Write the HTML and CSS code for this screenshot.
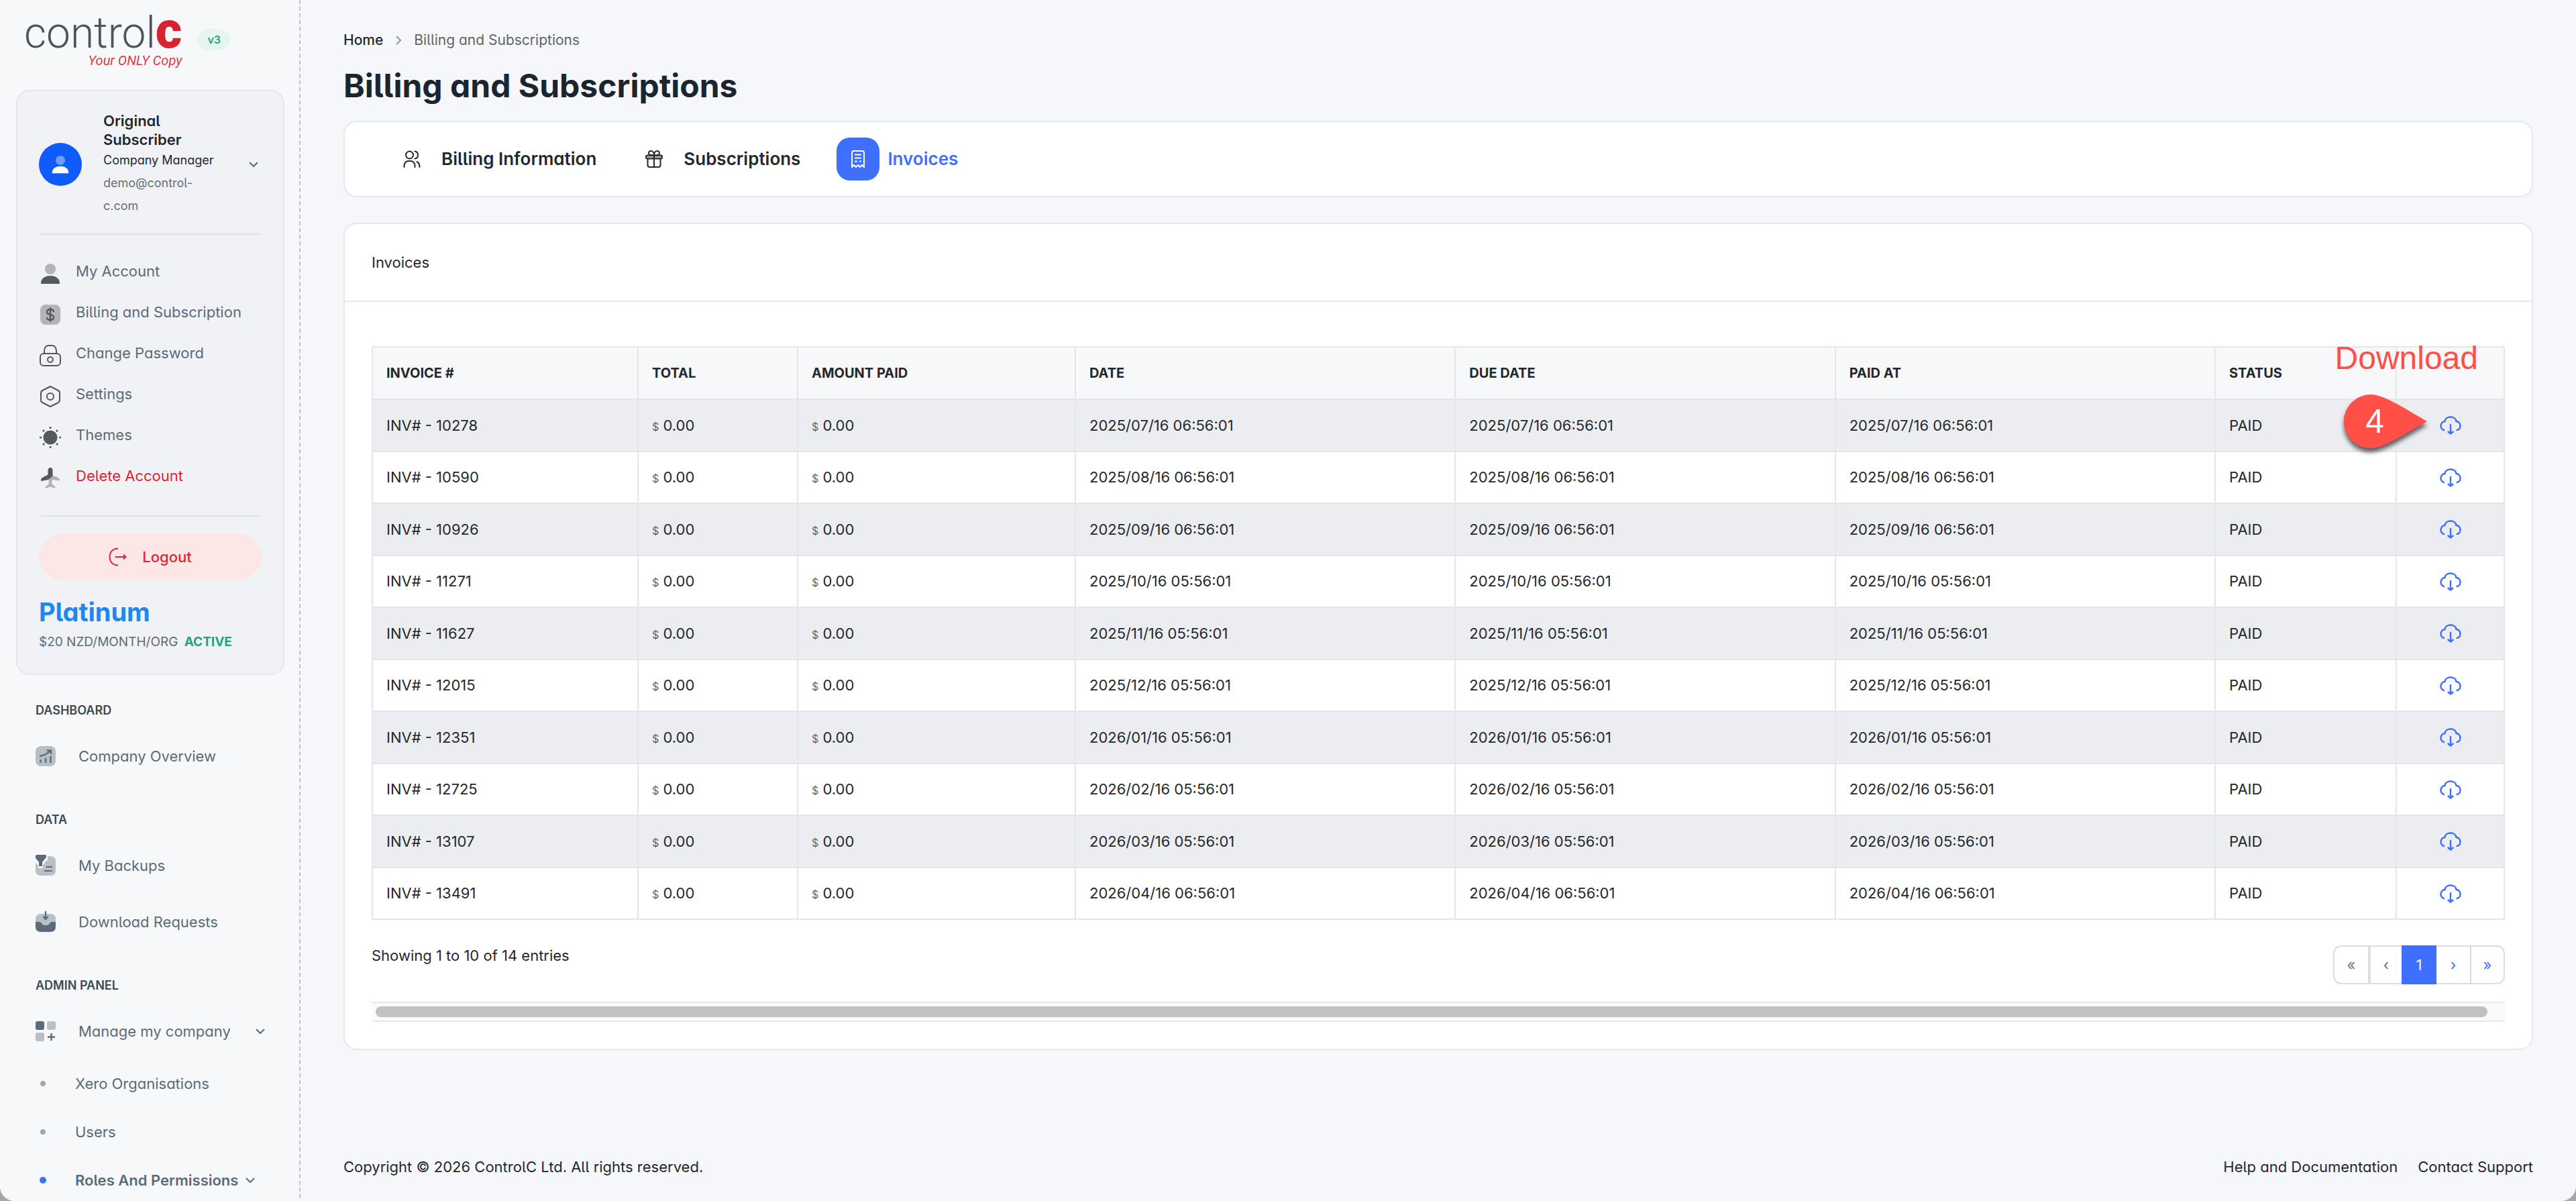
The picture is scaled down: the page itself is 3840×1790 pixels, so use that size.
FILE: index.html
```html
<!DOCTYPE html>
<html lang="en">
<head>
  <meta charset="UTF-8" />
  <meta name="viewport" content="width=device-width, initial-scale=1.0"/>
  <title>Billing and Subscriptions - ControlC</title>
  <link rel="stylesheet" href="styles.css">
</head>
<body>
  <!-- Shared icons -->
  <svg class="sprite" aria-hidden="true">
    <symbol id="i-user" viewBox="0 0 32 32">
      <circle cx="16" cy="9" r="8" opacity=".4"/>
      <path d="M2 31v-1C2 23 8 19 16 19s14 4 14 11v1z"/>
    </symbol>
    <symbol id="i-chevron" viewBox="0 0 16 16">
      <path d="M2 5l6 6 6-6" fill="none" stroke="currentColor" stroke-width="2"/>
    </symbol>
    <symbol id="i-cloud" viewBox="0 0 32 28">
      <g fill="none" stroke="currentColor" stroke-width="2.400" stroke-linecap="round" stroke-linejoin="round">
        <path d="M6 21C3 20 1.500 17 1.500 14.500C1.500 11 4 8 7.500 8C8 4 11.500 1.500 16 1.500s8 2.500 8.500 6.500c3.500 0 6 3 6 6.500c0 3.500-2 6-5 6.500"/>
        <path d="M16 13v13M12.500 23.500l3.500 3 3.500-3"/>
      </g>
    </symbol>
  </svg>

  <div class="app">
    <aside class="sidebar">
      <div class="brand">
        <a class="logo" href="#">
          <span class="logo-name">control<b>c</b></span>
          <em>Your ONLY Copy</em>
        </a>
        <span class="version">v3</span>
      </div>

      <div class="profile">
        <button class="profile-head">
          <span class="avatar"><svg width="28" height="30"><use href="#i-user"/></svg></span>
          <span class="profile-info">
            <strong>Original Subscriber</strong>
            <span class="role">Company Manager</span>
            <span class="email">demo@control-c.com</span>
          </span>
          <svg class="chevron" width="16" height="16"><use href="#i-chevron"/></svg>
        </button>

        <nav class="profile-menu">
          <a href="#"><svg width="32" height="32"><use href="#i-user"/></svg>My Account</a>
          <a href="#">
            <svg width="32" height="32" viewBox="0 0 32 32">
              <rect x="1" y="1" width="30" height="30" rx="8" opacity=".4"/>
              <path d="M21 12c0-3-2-4-5-4s-5 1-5 4 3 3.500 5 4 5 1 5 4-2 4-5 4-5-1-5-4M16 5.500v21" fill="none" stroke="currentColor" stroke-width="2.400"/>
            </svg>Billing and Subscription</a>
          <a href="#">
            <svg width="32" height="32" viewBox="0 0 32 32" fill="none" stroke="currentColor" stroke-width="2">
              <rect x="1" y="13" width="30" height="18" rx="5"/>
              <path d="M7 13V9c0-5 3-8 6-8h6c3 0 6 3 6 8v4"/>
              <circle cx="16" cy="22" r="4"/>
            </svg>Change Password</a>
          <a href="#">
            <svg width="32" height="32" viewBox="0 0 32 32" fill="none" stroke="currentColor" stroke-width="2" stroke-linejoin="round">
              <path d="M16 1l11 5.500q3 1.500 3 4v11q0 2.500-3 4L16 31 5 25.500q-3-1.500-3-4v-11q0-2.500 3-4z"/>
              <circle cx="16" cy="16" r="5"/>
            </svg>Settings</a>
          <a href="#">
            <svg width="32" height="32" viewBox="0 0 32 32">
              <circle cx="16" cy="16" r="10.500"/>
              <path d="M16 0v3M16 29v3M0 16h3M29 16h3M5 5l2 2M25 25l2 2M5 27l2-2M25 7l2-2" stroke="currentColor" stroke-width="2.500"/>
            </svg>Themes</a>
          <a class="danger" href="#">
            <svg width="32" height="32" viewBox="0 0 32 32">
              <g opacity=".4">
                <path d="M18 11l9 3.500c3 1.500 3 3 3 5l-11-1.500-1 6 5 4c1 1 .5 2 0 3l-7-2.500L9 31c-.5-1-1-2 0-3l5-4-.5-5z"/>
              </g>
              <path d="M12.500 4c0-2 1.500-4 3.500-4s3.500 2 3.500 4v8.500L13 18 2 20c0-2 0-4 3-5.500l7.500-4z"/>
            </svg>Delete Account</a>
        </nav>

        <button class="logout">
          <svg width="28" height="28" viewBox="0 0 28 28" fill="none" stroke="currentColor" stroke-width="2">
            <path d="M14 1.500C6 1.500 1.500 7 1.500 14S6 26.500 14 26.500M9.500 14h14"/>
            <path d="M22 9.500l5 4.500-5 4.500z" fill="currentColor" stroke="none"/>
          </svg>Logout
        </button>
        <h2 class="plan">Platinum</h2>
        <p class="price">$20 NZD/MONTH/ORG <b>ACTIVE</b></p>
      </div>

      <nav class="menu">
        <h3>Dashboard</h3>
        <a class="item" href="#">
          <svg width="30" height="30" viewBox="0 0 30 30">
            <rect width="30" height="30" rx="8" opacity=".4"/>
            <path d="M7.500 20v5M15 18v7M22.500 15v10M6 15c6-1 11-3 16-8M16.500 6.500H23V12" fill="none" stroke="currentColor" stroke-width="2.400"/>
          </svg>Company Overview</a>
      </nav>
      <nav class="menu">
        <h3>Data</h3>
        <a class="item" href="#">
          <svg width="30" height="32" viewBox="0 0 30 32">
            <path d="M18 2h4q8 0 8 8v13q0 8-8 8H8q-8 0-8-8V12l4 4v3q3 3 7 0v-4l7-8z" opacity=".4"/>
            <path d="M1.500 0H15q1 0 1 1v3L10 11v6H5v-6L0 5V1.500Q0 0 1.500 0z"/>
            <path d="M16 18h9M13 24h12" stroke="currentColor" stroke-width="2"/>
          </svg>My Backups</a>
        <a class="item" href="#">
          <svg width="30" height="32" viewBox="0 0 30 32">
            <path d="M0 16v-4q0-8 8-8h14q8 0 8 8v4h-6q-2 0-3 2t-3 3h-6q-2-1-3-3t-3-2z" opacity=".4"/>
            <path d="M0 16h6q2 0 3 2t3 3h6q2-1 3-3t3-2h6v7q0 8-8 8H8q-8 0-8-8z"/>
            <path d="M15 0v10M11.500 8l3.500 4 3.500-4" fill="none" stroke="currentColor" stroke-width="2.400"/>
          </svg>Download Requests</a>
      </nav>
      <nav class="menu">
        <h3>Admin Panel</h3>
        <a class="item" href="#">
          <svg width="30" height="30" viewBox="0 0 30 30">
            <rect width="13" height="13" rx="3"/>
            <rect x="17" width="13" height="13" rx="3" opacity=".4"/>
            <rect y="17" width="13" height="13" rx="3" opacity=".4"/>
            <path d="M23.500 18v11M18 23.500h11" stroke="currentColor" stroke-width="2.400"/>
          </svg>Manage my company
          <svg class="chevron end" width="16" height="16"><use href="#i-chevron"/></svg></a>
        <a class="sub" href="#">Xero Organisations</a>
        <a class="sub" href="#">Users</a>
        <a class="sub active" href="#">Roles And Permissions
          <svg class="chevron" width="16" height="16"><use href="#i-chevron"/></svg></a>
      </nav>
    </aside>

    <main class="content">
      <nav class="breadcrumb">
        <a href="#">Home</a>
        <svg width="16" height="16" viewBox="0 0 16 16"><path d="M5 2l6 6-6 6" fill="none" stroke="#8a959f" stroke-width="2"/></svg>
        <span>Billing and Subscriptions</span>
      </nav>
      <h1>Billing and Subscriptions</h1>

      <nav class="card tabs">
        <a href="#">
          <span class="tab-icon">
            <svg width="26" height="26" viewBox="0 0 26 26" fill="none" stroke="currentColor" stroke-width="2" stroke-linecap="round">
              <circle cx="9.500" cy="7" r="5.500"/>
              <path d="M1.500 25v-2c0-4 3-7 6-7h4c3 0 6 3 6 7v2M17.500 1.500c3 .5 4.500 3 4.500 5.500s-1.500 5-4.500 5.500M20.500 17c3 1.500 4 3.500 4 8"/>
            </svg>
          </span>Billing Information</a>
        <a href="#">
          <span class="tab-icon">
            <svg width="26" height="26" viewBox="0 0 26 26" fill="none" stroke="currentColor" stroke-width="2">
              <rect x="1" y="7.500" width="24" height="5" rx="2" fill="#aaadb0"/>
              <path d="M3.500 12.500V22q0 3 3 3h13q3 0 3-3v-9.500M13 7v18M13 7.500C11 7.500 5 7.500 5 4.500C5 2.500 6.500 1 8.500 1C12 1 13 5 13 7.500C13 5 14 1 17.500 1C19.500 1 21 2.500 21 4.500C21 7.500 15 7.500 13 7.500z"/>
            </svg>
          </span>Subscriptions</a>
        <a class="active" href="#">
          <span class="tab-icon">
            <svg width="22" height="26" viewBox="0 0 22 26" fill="none" stroke="currentColor" stroke-width="2">
              <path d="M2 25V4q0-3 3-3h12q3 0 3 3v21l-3-3-3 3-3-3-3 3-3-3zM6 6.500h10M6 11.500h10M6 16.500h4M13 16.500h3"/>
            </svg>
          </span>Invoices</a>
      </nav>

      <section class="card">
        <h2 class="card-header">Invoices</h2>
        <div class="card-body">
          <div class="table-wrap">
            <table class="invoices">
              <colgroup>
                <col class="col-number"><col class="col-total"><col class="col-paid">
                <col><col><col>
                <col class="col-status"><col class="col-action">
              </colgroup>
              <thead>
                <tr>
                  <th>Invoice #</th><th>Total</th><th>Amount Paid</th><th>Date</th><th>Due Date</th><th>Paid At</th><th>Status</th><th></th>
                </tr>
              </thead>
              <tbody>
                <tr><td>INV# - 10278</td><td><small>$</small> 0.00</td><td><small>$</small> 0.00</td><td>2025/07/16 06:56:01</td><td>2025/07/16 06:56:01</td><td>2025/07/16 06:56:01</td><td>PAID</td><td><a href="#" aria-label="Download"><svg width="32" height="28"><use href="#i-cloud"/></svg></a></td></tr>
                <tr><td>INV# - 10590</td><td><small>$</small> 0.00</td><td><small>$</small> 0.00</td><td>2025/08/16 06:56:01</td><td>2025/08/16 06:56:01</td><td>2025/08/16 06:56:01</td><td>PAID</td><td><a href="#" aria-label="Download"><svg width="32" height="28"><use href="#i-cloud"/></svg></a></td></tr>
                <tr><td>INV# - 10926</td><td><small>$</small> 0.00</td><td><small>$</small> 0.00</td><td>2025/09/16 06:56:01</td><td>2025/09/16 06:56:01</td><td>2025/09/16 06:56:01</td><td>PAID</td><td><a href="#" aria-label="Download"><svg width="32" height="28"><use href="#i-cloud"/></svg></a></td></tr>
                <tr><td>INV# - 11271</td><td><small>$</small> 0.00</td><td><small>$</small> 0.00</td><td>2025/10/16 05:56:01</td><td>2025/10/16 05:56:01</td><td>2025/10/16 05:56:01</td><td>PAID</td><td><a href="#" aria-label="Download"><svg width="32" height="28"><use href="#i-cloud"/></svg></a></td></tr>
                <tr><td>INV# - 11627</td><td><small>$</small> 0.00</td><td><small>$</small> 0.00</td><td>2025/11/16 05:56:01</td><td>2025/11/16 05:56:01</td><td>2025/11/16 05:56:01</td><td>PAID</td><td><a href="#" aria-label="Download"><svg width="32" height="28"><use href="#i-cloud"/></svg></a></td></tr>
                <tr><td>INV# - 12015</td><td><small>$</small> 0.00</td><td><small>$</small> 0.00</td><td>2025/12/16 05:56:01</td><td>2025/12/16 05:56:01</td><td>2025/12/16 05:56:01</td><td>PAID</td><td><a href="#" aria-label="Download"><svg width="32" height="28"><use href="#i-cloud"/></svg></a></td></tr>
                <tr><td>INV# - 12351</td><td><small>$</small> 0.00</td><td><small>$</small> 0.00</td><td>2026/01/16 05:56:01</td><td>2026/01/16 05:56:01</td><td>2026/01/16 05:56:01</td><td>PAID</td><td><a href="#" aria-label="Download"><svg width="32" height="28"><use href="#i-cloud"/></svg></a></td></tr>
                <tr><td>INV# - 12725</td><td><small>$</small> 0.00</td><td><small>$</small> 0.00</td><td>2026/02/16 05:56:01</td><td>2026/02/16 05:56:01</td><td>2026/02/16 05:56:01</td><td>PAID</td><td><a href="#" aria-label="Download"><svg width="32" height="28"><use href="#i-cloud"/></svg></a></td></tr>
                <tr><td>INV# - 13107</td><td><small>$</small> 0.00</td><td><small>$</small> 0.00</td><td>2026/03/16 05:56:01</td><td>2026/03/16 05:56:01</td><td>2026/03/16 05:56:01</td><td>PAID</td><td><a href="#" aria-label="Download"><svg width="32" height="28"><use href="#i-cloud"/></svg></a></td></tr>
                <tr><td>INV# - 13491</td><td><small>$</small> 0.00</td><td><small>$</small> 0.00</td><td>2026/04/16 06:56:01</td><td>2026/04/16 06:56:01</td><td>2026/04/16 06:56:01</td><td>PAID</td><td><a href="#" aria-label="Download"><svg width="32" height="28"><use href="#i-cloud"/></svg></a></td></tr>
              </tbody>
            </table>

            <!-- Step callout over the table -->
            <span class="callout-label">Download</span>
            <div class="callout">
              <svg width="124" height="80" viewBox="0 0 124 80"><path d="M40 0C60 0 92 22 124 40C92 58 60 80 40 80C18 80 0 62 0 40S18 0 40 0z" fill="#ff4f47"/></svg>
              <span>4</span>
            </div>
          </div>

          <div class="table-footer">
            <p>Showing 1 to 10 of 14 entries</p>
            <div class="pagination">
              <button disabled>«</button>
              <button disabled>‹</button>
              <button class="current">1</button>
              <button>›</button>
              <button>»</button>
            </div>
          </div>
          <div class="scrollbar"><div class="thumb"></div></div>
        </div>
      </section>

      <footer>
        <p>Copyright © 2026 ControlC Ltd. All rights reserved.</p>
        <div class="footer-links">
          <a href="#">Help and Documentation</a>
          <a href="#">Contact Support</a>
        </div>
      </footer>
    </main>
  </div>
</body>
</html>
```
FILE: styles.css
```css
* {
  box-sizing: border-box;
}
body {
  margin: 0;
  background: #a6a6a6;
  color: #23282e;
  font-family: Inter, sans-serif;
  font-size: 22px;
  line-height: 30px;
  font-feature-settings: "cv11", "cv05";
}
h1, h2, h3, p {
  margin: 0;
}
a {
  color: inherit;
  text-decoration: none;
}
button {
  font: inherit;
  font-feature-settings: inherit;
  color: inherit;
  border: none;
  background: none;
  padding: 0;
  cursor: pointer;
}
svg {
  flex: none;
}
svg:not([fill]) {
  fill: currentColor;
}
.sprite {
  display: none;
}
.app {
  display: flex;
  height: 100vh;
  overflow: hidden;
  background: #f6f7fa;
  border-radius: 0 0 22px 22px;
}

/* Sidebar */
.sidebar {
  flex: none;
  width: 448px;
  padding: 0 24px;
  background: repeating-linear-gradient(#b9c4d0 0 6px, transparent 6px 10px) right / 2px 100% no-repeat #f7f8fa;
  color: #5b6b79;
  overflow: hidden;
}
.brand {
  display: flex;
  align-items: center;
  gap: 24px;
  height: 134px;
  padding: 0 12px 16px;
}
.logo {
  display: flex;
  flex-direction: column;
  align-items: flex-end;
  font-family: Roboto, sans-serif;
}
.logo-name {
  font-size: 64px;
  font-weight: 300;
  line-height: 56px;
  color: #4a555c;
}
.logo-name b {
  font-size: 76px;
  font-weight: 900;
  line-height: 56px;
  color: #d8232e;
}
.logo em {
  font-size: 20px;
  line-height: 24px;
  color: #dd3c45;
}
.version {
  padding: 0 14px;
  border-radius: 16px;
  background: #e6f5ef;
  color: #27a376;
  font-size: 16px;
  font-weight: 600;
  line-height: 32px;
}
.profile {
  width: 400px;
  padding: 30px 32px 26px;
  border: 2px solid #e5e7ea;
  border-radius: 20px;
  background: #f1f2f6;
}
.profile-head {
  display: flex;
  align-items: center;
  width: 100%;
  padding-bottom: 24px;
  border-bottom: 2px solid #dfe1e5;
  text-align: left;
}
.avatar {
  display: flex;
  align-items: center;
  justify-content: center;
  width: 64px;
  height: 64px;
  border-radius: 50%;
  background: #105bfb;
  color: #fff;
}
.profile-info {
  width: 184px;
  margin: 0 24px 0 32px;
  color: #23282e;
}
.profile-info strong {
  display: block;
  font-weight: 600;
  line-height: 28px;
}
.role, .email {
  display: block;
  font-size: 18px;
  line-height: 34px;
}
.email {
  width: 140px;
  color: #6b6f75;
}
.profile-head .chevron {
  margin-left: 8px;
}
.profile-menu {
  padding: 23px 0 29px;
  border-bottom: 2px solid #dfe1e5;
}
.profile-menu a {
  display: flex;
  align-items: center;
  gap: 22px;
  height: 61px;
  padding-left: 1px;
}
.profile-menu svg {
  margin-top: 8px;
  color: #55585c;
}
.profile-menu .danger {
  color: #dc2631;
}
.logout {
  display: flex;
  align-items: center;
  justify-content: center;
  gap: 22px;
  width: 100%;
  height: 68px;
  margin-top: 26px;
  border-radius: 34px;
  background: #fde6e6;
  color: #dc2631;
  font-weight: 500;
}
.plan {
  margin-top: 24px;
  font-size: 38px;
  line-height: 48px;
  color: #1e88f0;
}
.price {
  font-size: 19px;
  line-height: 42px;
}
.price b {
  margin-left: 4px;
  color: #27a376;
}
.menu {
  padding: 27px 12px 0 29px;
}
.menu h3 {
  font-size: 18px;
  font-weight: 600;
  line-height: 52px;
  text-transform: uppercase;
  color: #3e4853;
}
.item {
  display: flex;
  align-items: center;
  gap: 34px;
  height: 84px;
}
.item .end {
  margin-left: auto;
  margin-right: 16px;
}
.sub {
  display: flex;
  align-items: center;
  gap: 10px;
  height: 72px;
}
.sub::before {
  content: "";
  width: 8px;
  height: 8px;
  margin: 0 34px 0 7px;
  border-radius: 50%;
  background: #9ea8b2;
}
.sub.active {
  font-weight: 600;
}
.sub.active::before {
  width: 10px;
  height: 10px;
  margin: 0 33px 0 6px;
  background: #3e6fff;
}

/* Main column */
.content {
  display: flex;
  flex-direction: column;
  flex: 1;
  padding: 44px 64px 36px;
}
.breadcrumb {
  display: flex;
  align-items: center;
  gap: 15px;
  font-size: 21px;
  line-height: 32px;
  color: #5f6468;
}
.breadcrumb a {
  font-weight: 500;
  color: #23282e;
}
h1 {
  margin: 20px 0;
  font-size: 48px;
  line-height: 64px;
  color: #1b2530;
}
.card {
  border: 2px solid #e5e9ec;
  border-radius: 20px;
  background: #fff;
}
.tabs {
  display: flex;
  gap: 54px;
  padding: 23px 68px;
  margin-bottom: 38px;
}
.tabs a {
  display: flex;
  align-items: center;
  gap: 12px;
  font-size: 26px;
  font-weight: 600;
}
.tab-icon {
  display: flex;
  align-items: center;
  justify-content: center;
  width: 64px;
  height: 64px;
  border-radius: 20px;
}
.tabs .active {
  color: #3e6fff;
}
.active .tab-icon {
  background: #3e6fff;
  color: #fff;
}
.card-header {
  padding: 0 40px;
  border-bottom: 2px solid #e5e9ec;
  font-size: 22px;
  font-weight: 400;
  line-height: 114px;
}
.card-body {
  padding: 66px 40px 40px;
}
.table-wrap {
  position: relative;
}
.invoices {
  width: 100%;
  table-layout: fixed;
  border-collapse: collapse;
}
.col-number {
  width: 396px;
}
.col-total {
  width: 238px;
}
.col-paid {
  width: 414px;
}
.col-status {
  width: 270px;
}
.col-action {
  width: 161px;
}
.invoices th, .invoices td {
  padding: 23px 20px;
  border: 2px solid #e3e7ea;
  text-align: left;
}
.invoices th {
  background: #f7f8fa;
  font-size: 20px;
  font-weight: 700;
  text-transform: uppercase;
}
.invoices tbody tr:nth-child(odd) {
  background: #ecedf1;
}
.invoices tbody tr:nth-child(even) {
  line-height: 29px;
}
.invoices small {
  font-size: 16px;
  line-height: 16px;
  color: #5f6468;
}
.invoices td:last-child {
  padding: 0;
  text-align: center;
  color: #3e6fff;
}
.invoices td svg {
  display: block;
  margin: 0 auto;
}
.callout-label {
  position: absolute;
  top: -6px;
  right: 40px;
  font-family: "Liberation Sans", sans-serif;
  font-size: 48px;
  line-height: 48px;
  color: #ff4f47;
}
.callout {
  position: absolute;
  top: 72px;
  right: 116px;
  width: 124px;
  height: 80px;
  filter: drop-shadow(0 6px 3px rgba(0, 0, 0, .6));
}
.callout span {
  position: absolute;
  top: 0;
  left: 32px;
  font-family: "Liberation Sans", sans-serif;
  font-size: 50px;
  line-height: 80px;
  color: #fff;
}
.table-footer {
  display: flex;
  justify-content: space-between;
  padding: 38px 0 26px;
}
.pagination {
  display: flex;
}
.pagination button {
  width: 50px;
  height: 58px;
  border: 2px solid #d8dee4;
  border-width: 2px 0;
  color: #3e6fff;
}
.pagination button:first-child {
  width: 54px;
  border-width: 2px;
  border-radius: 12px 0 0 12px;
}
.pagination button:last-child {
  width: 52px;
  border-width: 2px;
  border-radius: 0 12px 12px 0;
}
.pagination button:nth-child(2) {
  width: 48px;
  border-left-width: 2px;
}
.pagination button:disabled {
  color: #6c757d;
}
.pagination .current {
  width: 52px;
  border-color: #3e6fff;
  background: #3e6fff;
  color: #fff;
}
.scrollbar {
  padding: 5px 26px 5px 6px;
  border: 2px solid #e8e8e8;
  border-width: 2px 0;
  background: #fafafa;
}
.thumb {
  height: 16px;
  border-radius: 8px;
  background: #c1c1c1;
}
footer {
  display: flex;
  justify-content: space-between;
  margin-top: auto;
}
.footer-links {
  display: flex;
  gap: 30px;
}
```
